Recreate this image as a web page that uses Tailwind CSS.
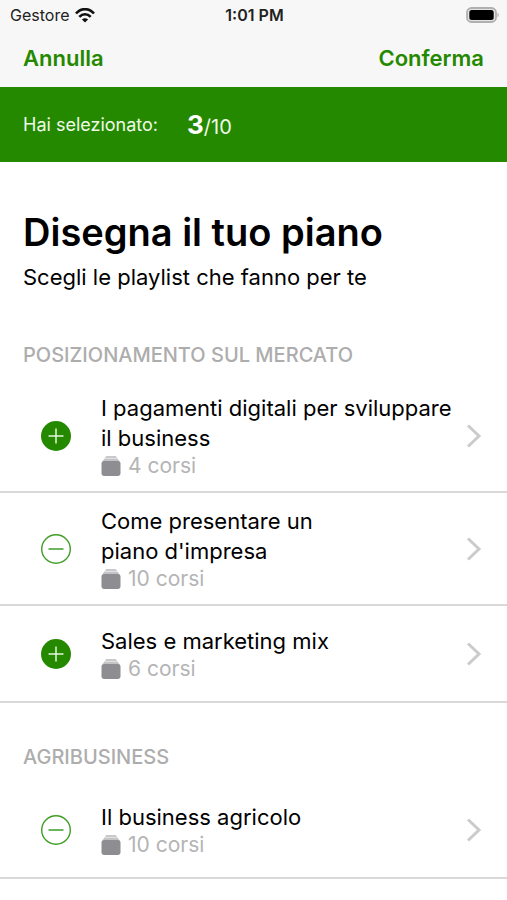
<!DOCTYPE html>
<html lang="it">
<head>
<meta charset="utf-8">
<meta name="viewport" content="width=device-width, initial-scale=1">
<title>Disegna il tuo piano</title>
<script src="https://cdn.jsdelivr.net/npm/@tailwindcss/browser@4"></script>
</head>
<body class="bg-white font-['Inter','Liberation_Sans',sans-serif] text-black">
<svg class="hidden" aria-hidden="true">
  <symbol id="add" viewBox="0 0 30 30"><circle cx="15" cy="15" r="15" fill="#258900"/><path d="M7.5 15h15M15 7.5v15" stroke="#e4f5dc" stroke-width="1.5"/></symbol>
  <symbol id="remove" viewBox="0 0 30 30"><circle cx="15" cy="15" r="14.3" fill="#fff" stroke="#3f9d24" stroke-width="1.4"/><path d="M7.5 15h15" stroke="#3f9d24" stroke-width="1.5"/></symbol>
  <symbol id="stack" viewBox="0 0 20 20"><path d="M5.3 0h9.4l1.5 2H3.8z" fill="#c9c9cb"/><path d="M3.5 2.6h13L18.3 5H1.7z" fill="#c4c4c6"/><rect x=".5" y="5" width="19" height="15" rx="2.4" fill="#8e8e92"/></symbol>
  <symbol id="chevron" viewBox="0 0 16 24"><path d="M2 1.5 13 12 2 22.500" fill="none" stroke="#cbcbcb" stroke-width="3"/></symbol>
</svg>

<header class="bg-[#f7f7f7]">
  <div class="grid h-[30px] grid-cols-3 items-center pr-2 pl-2.5 text-[#222]">
    <div class="flex items-center gap-1.5 text-[16px]">
      <span>Gestore</span>
      <svg class="h-[15px] w-5" viewBox="0 0 20 15" fill="none" stroke="#111" stroke-width="2.6"><path d="M1 5.500C6-.3 14-.3 19 5.500"/><path d="M4.300 8.900c3.300-3.500 8.100-3.500 11.400 0"/><path d="M10 14.600 6.900 11.500c1.800-1.700 4.400-1.700 6.200 0z" fill="#111" stroke="none"/></svg>
    </div>
    <time class="text-center text-[16px] font-semibold">1:01 PM</time>
    <svg class="h-4 w-[33px] justify-self-end" viewBox="0 0 33 16"><rect x="1" y="1" width="29" height="14" rx="4.500" fill="#e4e4e4" stroke="#b0b0b0" stroke-width="1.800"/><rect x="3.300" y="3" width="24.400" height="10" rx="2.500" fill="#000"/><path d="M31.500 5.500c1.600.8 1.600 4.200 0 5z" fill="#b0b0b0"/></svg>
  </div>
  <nav class="flex h-[57px] items-center justify-between px-[23px] text-[22px] font-semibold text-[#258900]">
    <button type="button">Annulla</button>
    <button type="button">Conferma</button>
  </nav>
</header>

<div class="flex h-[75px] items-center gap-[29px] bg-[#258900] px-[23px] text-[#effbe9]">
  <span class="text-[18px]">Hai selezionato:</span>
  <span class="text-[20px]"><strong class="text-[26px] font-bold text-white">3</strong>/10</span>
</div>

<main>
  <div class="px-[23px] pt-[46px]">
    <h1 class="text-[38px] leading-[48px] font-semibold">Disegna il tuo piano</h1>
    <p class="text-[22px] leading-[42px]">Scegli le playlist che fanno per te</p>
  </div>

  <section>
    <h2 class="px-[23px] pt-[45px] pb-[13px] text-[20px] leading-6 font-medium text-[#adadad]">POSIZIONAMENTO SUL MERCATO</h2>
    <ul>
      <li class="flex min-h-[97px] items-center border-b-2 border-[#d9d9d9] py-[13px] pl-[41px]">
        <button type="button" aria-label="Aggiungi" class="shrink-0"><svg class="size-[30px]"><use href="#add"/></svg></button>
        <a href="#" class="ml-[30px] flex flex-1 items-center justify-between pr-[25px]">
          <span><span class="block text-[22px] leading-[30px]">I pagamenti digitali per sviluppare<br>il business</span>
          <span class="flex items-center gap-[7px] text-[21px] leading-[25px] text-[#b4b4b6]"><svg class="size-5"><use href="#stack"/></svg>4 corsi</span></span>
          <svg class="h-6 w-4 shrink-0"><use href="#chevron"/></svg>
        </a>
      </li>
      <li class="flex min-h-[97px] items-center border-b-2 border-[#d9d9d9] py-[13px] pl-[41px]">
        <button type="button" aria-label="Rimuovi" class="shrink-0"><svg class="size-[30px]"><use href="#remove"/></svg></button>
        <a href="#" class="ml-[30px] flex flex-1 items-center justify-between pr-[25px]">
          <span><span class="block text-[22px] leading-[30px]">Come presentare un<br>piano d'impresa</span>
          <span class="flex items-center gap-[7px] text-[21px] leading-[25px] text-[#b4b4b6]"><svg class="size-5"><use href="#stack"/></svg>10 corsi</span></span>
          <svg class="h-6 w-4 shrink-0"><use href="#chevron"/></svg>
        </a>
      </li>
      <li class="flex min-h-[97px] items-center border-b-2 border-[#d9d9d9] py-[13px] pl-[41px]">
        <button type="button" aria-label="Aggiungi" class="shrink-0"><svg class="size-[30px]"><use href="#add"/></svg></button>
        <a href="#" class="ml-[30px] flex flex-1 items-center justify-between pr-[25px]">
          <span><span class="block text-[22px] leading-[30px]">Sales e marketing mix</span>
          <span class="flex items-center gap-[7px] text-[21px] leading-[25px] text-[#b4b4b6]"><svg class="size-5"><use href="#stack"/></svg>6 corsi</span></span>
          <svg class="h-6 w-4 shrink-0"><use href="#chevron"/></svg>
        </a>
      </li>
    </ul>
  </section>

  <section>
    <h2 class="px-[23px] pt-[42px] pb-[13px] text-[20px] leading-6 font-medium text-[#adadad]">AGRIBUSINESS</h2>
    <ul>
      <li class="flex min-h-[97px] items-center border-b-2 border-[#d9d9d9] py-[13px] pl-[41px]">
        <button type="button" aria-label="Rimuovi" class="shrink-0"><svg class="size-[30px]"><use href="#remove"/></svg></button>
        <a href="#" class="ml-[30px] flex flex-1 items-center justify-between pr-[25px]">
          <span><span class="block text-[22px] leading-[30px]">Il business agricolo</span>
          <span class="flex items-center gap-[7px] text-[21px] leading-[25px] text-[#b4b4b6]"><svg class="size-5"><use href="#stack"/></svg>10 corsi</span></span>
          <svg class="h-6 w-4 shrink-0"><use href="#chevron"/></svg>
        </a>
      </li>
    </ul>
  </section>
</main>
</body>
</html>
